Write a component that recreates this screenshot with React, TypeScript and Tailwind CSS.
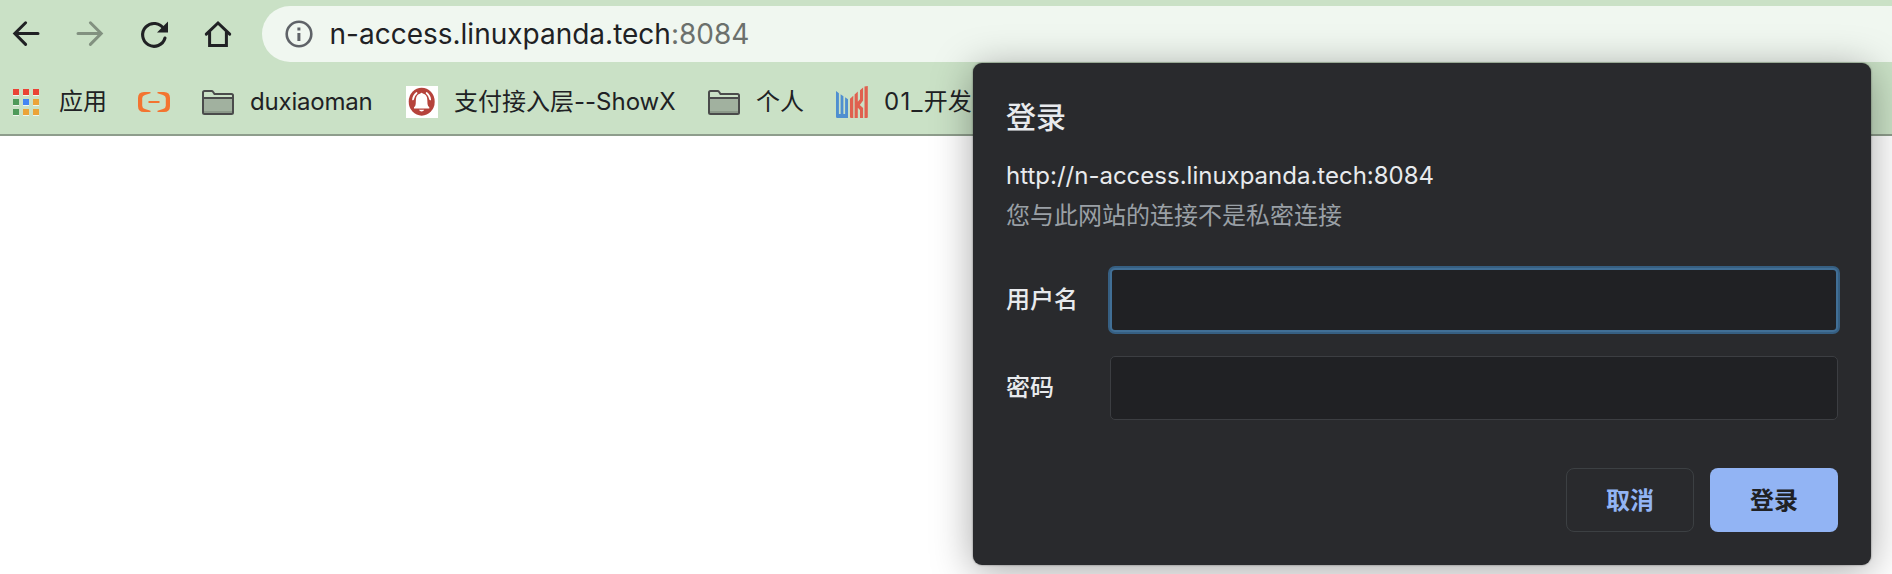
import type { ReactNode } from "react";

function BackIcon() {
  return (
    <svg className="h-8 w-8" viewBox="0 0 32 32" fill="none" stroke="#202124" strokeWidth="3" strokeLinecap="round">
      <path d="M28 15.5H5.5M15.6 4.8L4.8 15.5l10.8 10.9" strokeLinejoin="miter" />
    </svg>
  );
}

function ForwardIcon() {
  return (
    <svg className="h-8 w-8" viewBox="0 0 32 32" fill="none" stroke="#829180" strokeWidth="3" strokeLinecap="round">
      <path d="M4 15.5h22.5M16.4 4.8l10.8 10.7-10.8 10.9" />
    </svg>
  );
}

function ReloadIcon() {
  return (
    <svg className="h-8 w-8" viewBox="0 0 32 32" fill="none">
      <path d="M25.8 11A11.4 11.4 0 1 0 27 20" stroke="#202124" strokeWidth="3.1" strokeLinecap="round" />
      <path d="M30 3.5v11H19z" fill="#202124" />
    </svg>
  );
}

function HomeIcon() {
  return (
    <svg className="h-8 w-8" viewBox="0 0 32 32" fill="none" stroke="#202124" strokeWidth="3">
      <path d="M4.3 16.2L16 5l11.7 11.2" strokeLinecap="round" />
      <path d="M7.6 13.8v13.7h16.8V13.8" />
    </svg>
  );
}

function InfoIcon() {
  return (
    <svg className="h-7 w-7" viewBox="0 0 28 28" fill="none">
      <circle cx="14" cy="14" r="12.3" stroke="#5f6368" strokeWidth="2.6" />
      <path d="M12.4 7.4h3v3h-3zM12.4 13h3v8h-3z" fill="#5f6368" />
    </svg>
  );
}

const appSquares = [
  "bg-[#ea4335]",
  "bg-[#ea4335]",
  "bg-[#ea4335]",
  "bg-[#4f9a5a]",
  "bg-[#4285f4]",
  "bg-[#eba338]",
  "bg-[#4f9a5a]",
  "bg-[#eba338]",
  "bg-[#eba338]",
];

function AppsIcon() {
  return (
    <div className="grid grid-cols-3 gap-1">
      {appSquares.map((color, i) => (
        <div key={i} className={`h-1.5 w-1.5 shadow-[0_1px_0_#f0f6ee] ${color}`} />
      ))}
    </div>
  );
}

function CloudIcon() {
  return (
    <svg className="h-5 w-8" viewBox="0 0 32 20" fill="#f37430">
      <path d="M12.5 0H6Q0 0 0 6v8q0 6 6 6h6.5v-1.2L7 17q-2.800-.7-2.800-3.200V6.200Q4.200 3.700 7 3l5.500-1.800z" />
      <path d="M19.500 0H26q6 0 6 6v8q0 6-6 6h-6.500v-1.200L25 17q2.800-.7 2.800-3.200V6.200Q27.800 3.700 25 3l-5.500-1.800z" />
      <path d="M10.500 9h11v2h-11z" />
    </svg>
  );
}

function FolderIcon() {
  return (
    <svg className="h-[25px] w-8" viewBox="0 0 32 25" fill="none" stroke="#4a4b4b" strokeWidth="2">
      <path d="M1 8h30v15q0 1-1 1H2q-1 0-1-1z" fill="#a1b19f" stroke="none" />
      <path d="M2 21h28v2H2z" fill="#8b9989" stroke="none" />
      <path d="M1 22.500V2.500Q1 1 2.500 1h7q1 0 1.500.8L12.500 4h17Q31 4 31 5.500v17q0 1.500-1.500 1.500h-27Q1 24 1 22.500zM1 8h30" />
    </svg>
  );
}

function BellIcon() {
  return (
    <svg className="h-8 w-8" viewBox="0 0 32 32">
      <path d="M0 0h32v32H0z" fill="#fff" />
      <ellipse cx="15.700" cy="15.700" rx="13" ry="14" fill="#b5433b" />
      <path
        d="M14.400 7.500q1.200-1.300 2.400 0 4.300 1 4.500 6 0 4.800.8 6.500l1.200 1.200v1.300H8v-1.300L9.200 20q.7-1.700.7-6.500.2-5 4.500-6zM13 23.800h5.200q-.6 1.700-2.600 1.700t-2.600-1.700z"
        fill="#fff"
      />
      <path d="M7 13.500q.4-4 3.600-6.500M24.200 13.500q-.4-4-3.600-6.500" fill="none" stroke="#fff" strokeWidth="1.700" strokeLinecap="round" />
    </svg>
  );
}

function WikiIcon() {
  return (
    <svg className="h-8 w-8" viewBox="0 0 32 32">
      <g fill="#4f8fd0">
        <path d="M0 5l2.900 2.200v20.900h1.700V8.300l2.800 2v17.800h1.700V11.200l2.900 2V32H1.200Q0 32 0 30.800z" />
      </g>
      <g fill="#e0604f">
        <path d="M14 12.800l3.300-3V32H15q-1 0-1-1z" />
        <path d="M18.600 8.400l3.200-3v10.400l2.200-2.500V4.200l3.100-2.800v13L23.800 19l3.300 3v10H24v-8l-2.200-2.200V32h-3.200z" />
        <path d="M28.500.5L31.800 0v31q0 1-1 1h-2.300z" />
      </g>
    </svg>
  );
}

function Bookmark({ icon, children, className }: { icon: ReactNode; children?: ReactNode; className: string }) {
  return (
    <div className={`flex shrink-0 items-center whitespace-nowrap ${className}`}>
      {icon}
      {children}
    </div>
  );
}

function Toolbar() {
  return (
    <div className="flex h-[68px] items-center">
      <div className="flex shrink-0 items-center gap-8 pl-[10px]">
        <BackIcon />
        <ForwardIcon />
        <ReloadIcon />
        <HomeIcon />
      </div>
      <div className="ml-[28px] flex h-14 flex-1 items-center rounded-l-full bg-[#f0f7f0] pl-[22.5px]">
        <InfoIcon />
        <div className="ml-[17px] text-[28px] leading-8 whitespace-nowrap text-[#202124]">
          n-access.linuxpanda.tech<span className="text-[#6b706c]">:8084</span>
        </div>
      </div>
    </div>
  );
}

function BookmarksBar() {
  return (
    <div className="flex h-[68px] items-center overflow-hidden border-b-2 border-[#8e9d8c] pt-[2px] pl-[13px] text-2xl text-[#202124]">
      <Bookmark icon={<AppsIcon />} className="gap-5">
        <span className="w-[47px]">应用</span>
      </Bookmark>
      <Bookmark icon={<CloudIcon />} className="ml-8" />
      <Bookmark icon={<FolderIcon />} className="ml-8 gap-4">
        <span className="w-[124px] tracking-[-0.2px]">duxiaoman</span>
      </Bookmark>
      <Bookmark icon={<BellIcon />} className="ml-8 gap-4">
        <span className="w-[222px]">支付接入层--ShowX</span>
      </Bookmark>
      <Bookmark icon={<FolderIcon />} className="ml-8 gap-4">
        <span>个人</span>
      </Bookmark>
      <Bookmark icon={<WikiIcon />} className="ml-8 gap-4">
        <span>
          <span className="tracking-[1.3px]">01_</span>开发
        </span>
      </Bookmark>
    </div>
  );
}

function LoginDialog() {
  return (
    <form className="absolute top-[63px] left-[973px] flex h-[502px] w-[898px] flex-col rounded-[9px] bg-[#292a2d] pr-[33px] pl-[33px] text-2xl text-[#e8eaed] shadow-[0_6px_40px_rgba(0,0,0,0.35),0_0_2px_rgba(0,0,0,0.5)]">
      <h1 className="mt-[36px] text-[30px] leading-9 font-medium">登录</h1>
      <p className="mt-[25px] leading-8 whitespace-nowrap">http://n-access.linuxpanda.tech:8084</p>
      <p className="mt-2 leading-8 text-[#9aa0a6]">您与此网站的连接不是私密连接</p>
      <div className="mt-[36px] flex items-center">
        <label htmlFor="username" className="w-[104px] font-medium">用户名</label>
        <input
          id="username"
          className="h-16 w-[728px] rounded-[5px] border-2 border-[#416f96] bg-[#202124] px-4 ring-2 ring-[#365f82] outline-none"
        />
      </div>
      <div className="mt-6 flex items-center">
        <label htmlFor="password" className="w-[104px] font-medium">密码</label>
        <input
          id="password"
          type="password"
          className="h-16 w-[728px] rounded-[5px] border border-[#3c3e42] bg-[#202124] px-4 outline-none"
        />
      </div>
      <div className="mt-12 flex justify-end gap-4 font-semibold">
        <button type="button" className="h-16 w-32 rounded-lg border border-[#3c4043] pt-px text-[#92b4f4]">
          取消
        </button>
        <button type="button" className="h-16 w-32 rounded-lg bg-[#92b4f4] pt-px text-[#202124]">
          登录
        </button>
      </div>
    </form>
  );
}

export default function App() {
  return (
    <div className="relative h-[574px] w-[1892px] overflow-hidden bg-white font-['Inter','Noto_Sans_CJK_SC',sans-serif]">
      <header className="bg-[#cae1c6]">
        <Toolbar />
        <BookmarksBar />
      </header>
      <LoginDialog />
    </div>
  );
}
